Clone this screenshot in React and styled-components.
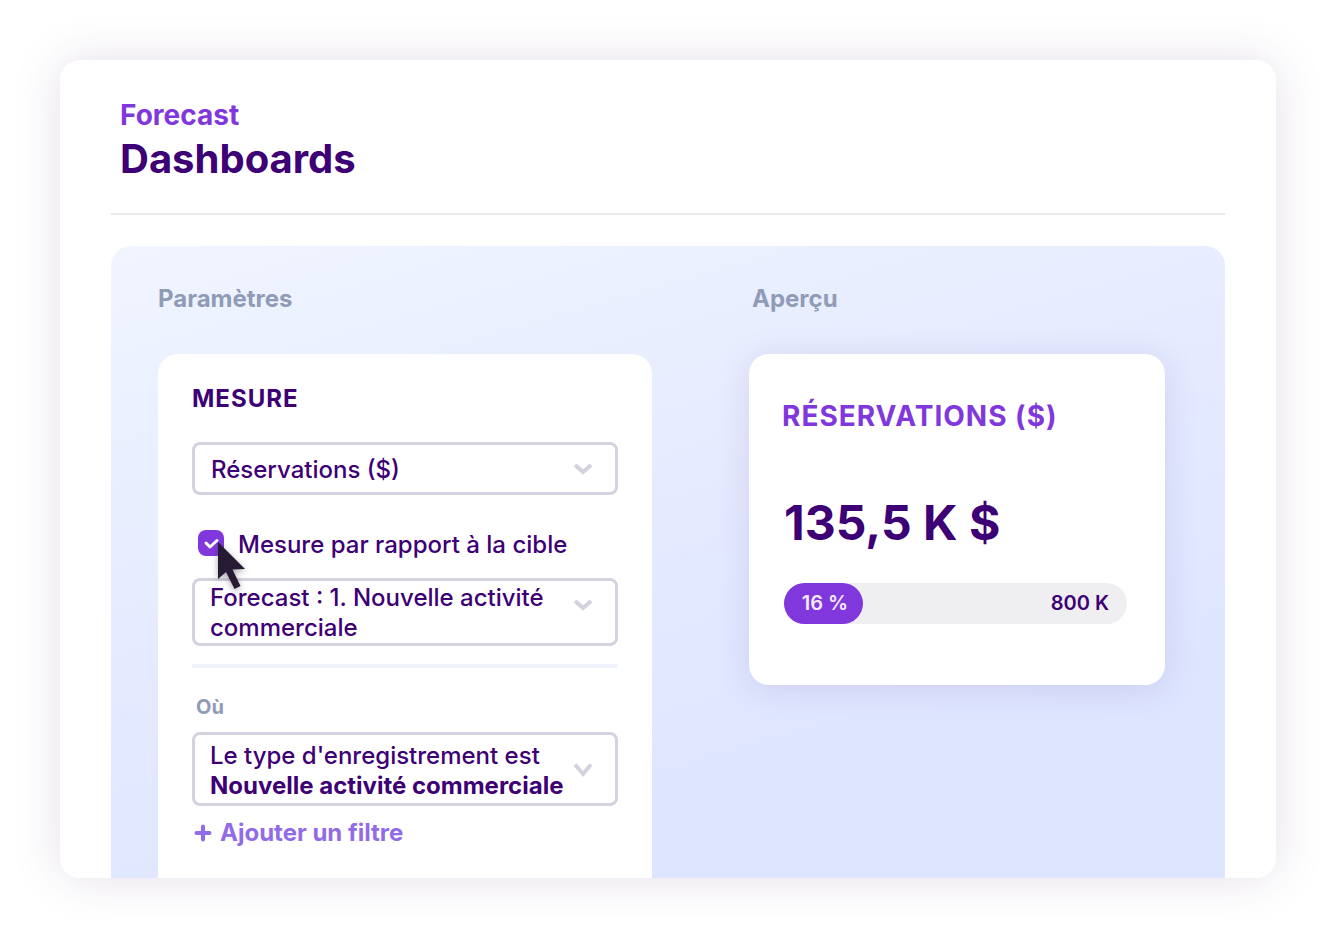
import { useState } from "react";
import styled, { createGlobalStyle } from 'styled-components'
import * as Select from '@radix-ui/react-select'

const GlobalStyle = createGlobalStyle`
    * { box-sizing: border-box; }
    body {
        margin: 0;
        background: #fff;
        color: #3d0075;
        font-family: Inter, "Liberation Sans", sans-serif;
    }
    button, select, input {
        font: inherit;
        color: inherit;
        margin: 0;
    }
    h1, h2, h3, p { margin: 0; }
    `
const Page = styled.div`
    display: flex;
    min-height: 100vh;
    padding: 60px;
    `
const Window = styled.main`
    flex: 1;
    display: flex;
    flex-direction: column;
    min-width: 0;
    padding: 0 51px;
    border-radius: 20px;
    background: #fff;
    overflow: hidden;
    box-shadow: 0 0 50px rgba(61, 0, 90, 0.13);
    `
const Header = styled.header`
    padding: 37px 9px 28px;
    `
const Product = styled.p`
    font-size: 28px;
    line-height: 36px;
    font-weight: 700;
    color: #8038dd;
    `
const PageTitle = styled.h1`
    font-size: 40px;
    line-height: 52px;
    font-weight: 700;
    `
const HeaderLine = styled.hr`
    width: 100%;
    margin: 0;
    border: 0;
    border-top: 2px solid #ebebeb;
    `
const Board = styled.div`
    flex: 1;
    display: grid;
    grid-template-columns: minmax(0, 494fr) minmax(0, 416fr);
    column-gap: 97px;
    margin-top: 31px;
    padding: 37px 60px 0 47px;
    border-radius: 20px 20px 0 0;
    background: linear-gradient(164deg, #f0f5ff 0%, #e5eaff 45%, #dde5ff 80%, #dde5ff 100%);
    `
const Column = styled.section`
    display: flex;
    flex-direction: column;
    `
const ColumnTitle = styled.h2`
    padding-left: ${p => p.$indent ? '3px' : '0'};
    margin-bottom: 39px;
    font-size: 24px;
    line-height: 32px;
    font-weight: 700;
    color: #8f9bb7;
    `
const Settings = styled.div`
    flex: 1;
    display: flex;
    flex-direction: column;
    padding: 29px 34px 30px;
    border-radius: 20px 20px 0 0;
    background: #fff;
    `
const GroupTitle = styled.h3`
    margin-bottom: 27px;
    font-size: 24px;
    line-height: 32px;
    font-weight: 700;
    letter-spacing: 1px;
    `
const SelectWrap = styled.div`
    display: grid;
    align-items: center;

    > * { grid-area: 1 / 1; }
    > svg {
        justify-self: end;
        margin-right: 23px;
        pointer-events: none;
    }
    `
const NativeSelect = styled.select`
    appearance: none;
    width: 100%;
    height: 53px;
    padding: 2px 60px 0 16px;
    border: 3px solid #d5d2e0;
    border-radius: 8px;
    background: #fff;
    font-size: 24px;
    line-height: 30px;
    font-weight: 500;
    `
const Trigger = styled(Select.Trigger)`
    display: flex;
    justify-content: space-between;
    align-items: flex-start;
    width: 100%;
    padding: ${p => p.$compact ? '2px 20px 0 15px' : '6px 20px 2px 15px'};
    border: 3px solid #d5d2e0;
    border-radius: 8px;
    background: #fff;
    font-size: 24px;
    line-height: 30px;
    font-weight: 500;
    text-align: left;

    svg {
        flex: none;
        margin-top: ${p => p.$compact ? '10px' : '16px'};
    }
    `
const Strong = styled.strong`
    display: block;
    font-weight: 700;
    white-space: nowrap;
    `
const Menu = styled(Select.Content)`
    padding: 8px;
    border: 3px solid #d5d2e0;
    border-radius: 8px;
    background: #fff;
    font-size: 24px;
    `
const CheckRow = styled.label`
    display: flex;
    align-items: flex-start;
    gap: 14px;
    margin: 35px 0 18px;
    padding-left: 6px;
    font-size: 24px;
    line-height: 30px;
    font-weight: 500;
    `
const CheckBox = styled.span`
    position: relative;
    display: grid;
    flex: none;
    width: 26px;
    height: 26px;

    > * { grid-area: 1 / 1; }
    > svg { pointer-events: none; }
    `
const CheckInput = styled.input`
    appearance: none;
    width: 26px;
    height: 26px;
    border-radius: 8px;
    background: #d5d2e0;

    &:checked { background: #8038dd; }
    `
const Pointer = styled.svg`
    position: absolute;
    left: 14px;
    top: 6px;
    z-index: 1;
    filter: drop-shadow(0 2px 3px rgba(38, 27, 50, 0.4));
    `
const Divider = styled.hr`
    width: 100%;
    margin: 18px 0 27px;
    border: 0;
    border-top: 4px solid #f1f4ff;
    `
const FieldLabel = styled.span`
    margin-bottom: 13px;
    padding-left: 4px;
    font-size: 20px;
    line-height: 24px;
    font-weight: 700;
    color: #8f9bb7;
    `
const AddFilter = styled.button`
    display: flex;
    align-items: center;
    align-self: flex-start;
    gap: 8px;
    margin-top: 12px;
    padding: 0 2px;
    border: 0;
    background: none;
    color: #926be6;
    font-size: 24px;
    line-height: 30px;
    font-weight: 700;
    `
const Preview = styled.article`
    padding: 44px 38px 61px 33px;
    border-radius: 20px;
    background: #fff;
    box-shadow: 0 4px 32px rgba(100, 70, 150, 0.15);
    `
const PreviewTitle = styled.h3`
    margin-bottom: 61px;
    font-size: 28px;
    line-height: 36px;
    font-weight: 700;
    letter-spacing: 1px;
    color: #8038dd;
    `
const Amount = styled.p`
    padding-left: 2px;
    margin-bottom: 32px;
    font-size: 48px;
    line-height: 56px;
    font-weight: 700;
    `
const Track = styled.div`
    display: flex;
    justify-content: space-between;
    align-items: center;
    margin-left: 2px;
    padding-right: 18px;
    border-radius: 21px;
    background: #efeff2;
    font-size: 20px;
    line-height: 41px;
    font-weight: 600;
    `
const Fill = styled.span`
    width: 79px;
    padding-left: 3px;
    border-radius: 21px;
    background: #8038dd;
    color: #f3eaff;
    text-align: center;
    `

const Chevron = ({ tall }) => (
    <svg width="24" height="24" viewBox="0 0 24 24" fill="none" stroke="#d5d2e0" strokeWidth="4" aria-hidden="true">
        <path d={tall ? "M4 7.5 12 17l8-9.5" : "M4 8l8 7 8-7"} />
    </svg>
)

const types = ['Nouvelle activité commerciale', 'Renouvellement']

function Dashboards(){
    const [checked, setChecked] = useState(true)
    const [target, setTarget] = useState(types[0])
    const [record, setRecord] = useState(types[0])

    return (
    <>
        <GlobalStyle />
        <Page>
            <Window>
                <Header>
                    <Product>Forecast</Product>
                    <PageTitle>Dashboards</PageTitle>
                </Header>
                <HeaderLine />
                <Board>
                    <Column>
                        <ColumnTitle>Paramètres</ColumnTitle>
                        <Settings>
                            <GroupTitle id="measure">MESURE</GroupTitle>
                            <SelectWrap>
                                <NativeSelect aria-labelledby="measure">
                                    <option>Réservations ($)</option>
                                </NativeSelect>
                                <Chevron />
                            </SelectWrap>
                            <CheckRow>
                                <CheckBox>
                                    <CheckInput type="checkbox" checked={checked} onChange={e => setChecked(e.target.checked)} />
                                    <svg width="26" height="26" viewBox="0 0 26 26" fill="none" stroke="#fff" strokeWidth="3" strokeLinecap="round" strokeLinejoin="round" aria-hidden="true">
                                        <path d="M8 13l4 4 7-6.500" />
                                    </svg>
                                    <Pointer width="40" height="56" viewBox="0 0 40 56" aria-hidden="true">
                                        <path d="M6 6v37l8-7 8.500 17 6-3-8-16.500 12.500-.5z" fill="#261b32" />
                                    </Pointer>
                                </CheckBox>
                                <span id="against">Mesure par rapport à la cible</span>
                            </CheckRow>
                            <Select.Root value={target} onValueChange={setTarget}>
                                <Trigger $compact aria-labelledby="against">
                                    <span>{`Forecast : 1. ${target}`}</span>
                                    <Chevron />
                                </Trigger>
                                <Menu>
                                    {types.map(t => <Select.Item key={t} value={t}><Select.ItemText>{t}</Select.ItemText></Select.Item>)}
                                </Menu>
                            </Select.Root>
                            <Divider />
                            <FieldLabel id="where">Où</FieldLabel>
                            <Select.Root value={record} onValueChange={setRecord}>
                                <Trigger aria-labelledby="where">
                                    <span>Le type d'enregistrement est <Strong>{record}</Strong></span>
                                    <Chevron tall />
                                </Trigger>
                                <Menu>
                                    {types.map(t => <Select.Item key={t} value={t}><Select.ItemText>{t}</Select.ItemText></Select.Item>)}
                                </Menu>
                            </Select.Root>
                            <AddFilter type="button">
                                <svg width="18" height="18" viewBox="0 0 18 18" stroke="currentColor" strokeWidth="4" strokeLinecap="round" aria-hidden="true">
                                    <path d="M9 2.500v13M2.500 9h13" />
                                </svg>
                                Ajouter un filtre
                            </AddFilter>
                        </Settings>
                    </Column>
                    <Column>
                        <ColumnTitle $indent>Aperçu</ColumnTitle>
                        <Preview>
                            <PreviewTitle>RÉSERVATIONS ($)</PreviewTitle>
                            <Amount>135,5 K $</Amount>
                            <Track>
                                <Fill>16 %</Fill>
                                <span>800 K</span>
                            </Track>
                        </Preview>
                    </Column>
                </Board>
            </Window>
        </Page>
    </>)
    ;
}


export default Dashboards;
